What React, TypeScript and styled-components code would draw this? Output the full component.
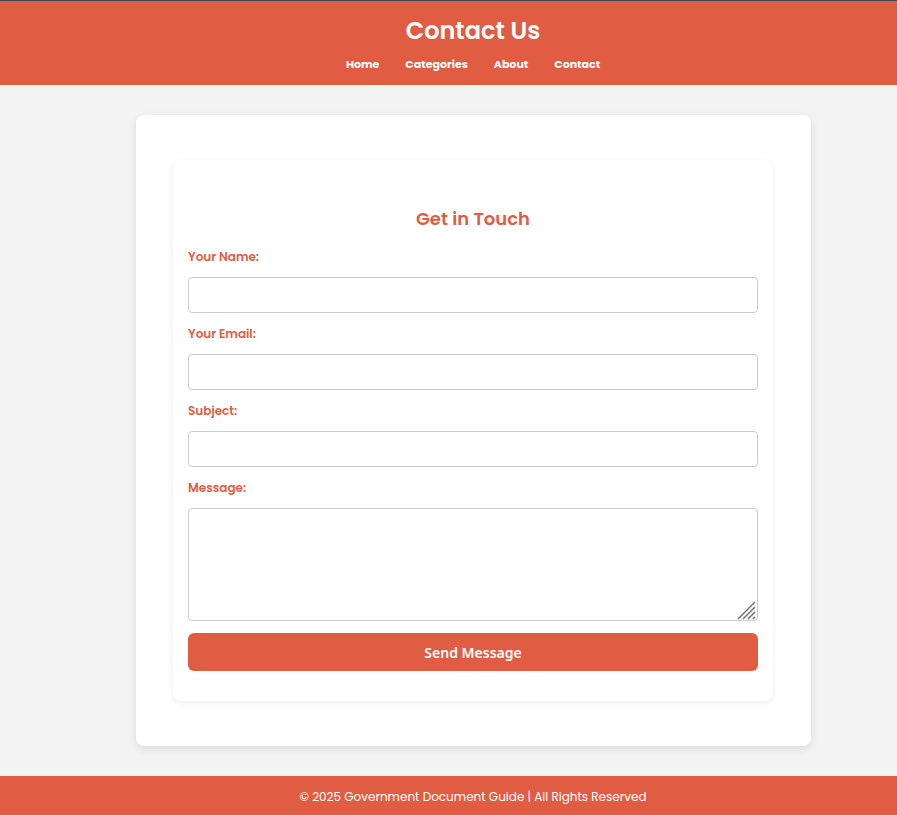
import React from 'react';
import styled, { createGlobalStyle } from 'styled-components';

const accent = '#e05d44';

const GlobalStyle = createGlobalStyle`
  * { box-sizing: border-box; }
  body {
    margin: 0;
    background: #f3f3f3;
    font-family: Poppins, Inter, "Open Sans", sans-serif;
  }
`;

const Page = styled.div`
  display: flex;
  flex-direction: column;
  min-height: 100vh;
`;

const Band = styled.div`
  background: ${accent};
  color: #fff;
  text-align: center;
  padding-left: 49px;
`;

const Header = styled(Band).attrs({ as: 'header' })`
  border-top: 1px solid #41454d;
  padding-top: 12px;
  padding-bottom: 12px;
`;

const Title = styled.h1`
  margin: 0;
  font-size: 24px;
  line-height: 36px;
  font-weight: 600;
`;

const Nav = styled.nav`
  display: flex;
  justify-content: center;
  gap: 26px;
  margin-top: 6px;
`;

const NavLink = styled.a`
  color: #fff;
  font-size: 11px;
  line-height: 18px;
  font-weight: 700;
  text-decoration: none;
`;

const Main = styled.main`
  flex: 1;
  padding: 30px 86px 30px 136px;
`;

const Card = styled.section`
  background: #fff;
  border-radius: 8px;
  padding: 45px 38px 45px 37px;
  box-shadow: 0 3px 8px rgba(0, 0, 0, 0.1);
`;

const Form = styled.form`
  display: flex;
  flex-direction: column;
  border-radius: 8px;
  padding: 45px 15px 30px;
  box-shadow: 0 2px 6px rgba(0, 0, 0, 0.08);
`;

const FormTitle = styled.h2`
  margin: 0 0 16px;
  color: ${accent};
  font-size: 18px;
  line-height: 27px;
  font-weight: 600;
  text-align: center;
`;

const Field = styled.div`
  display: flex;
  flex-direction: column;
  gap: 11px;
  margin-bottom: 12px;
`;

const Label = styled.label`
  color: ${accent};
  font-size: 12px;
  line-height: 18px;
  font-weight: 600;
`;

const Input = styled.input`
  width: 100%;
  height: 36px;
  padding: 8px;
  border: 1px solid #ccc;
  border-radius: 4px;
  font: inherit;
  font-size: 12px;
`;

const TextAreaBox = styled.div`
  position: relative;
`;

const TextArea = styled.textarea`
  display: block;
  width: 100%;
  height: 113px;
  padding: 8px;
  border: 1px solid #ccc;
  border-radius: 4px;
  font: inherit;
  font-size: 12px;
  resize: vertical;

  &::-webkit-resizer {
    background: transparent;
  }
`;

const Grip = styled.svg`
  position: absolute;
  right: 1px;
  bottom: 1px;
  pointer-events: none;
`;

const Submit = styled.button`
  height: 38px;
  border: 0;
  border-radius: 6px;
  background: ${accent};
  color: #fff;
  font-family: "Noto Sans", "Open Sans", sans-serif;
  font-size: 14px;
  font-weight: 600;
  cursor: pointer;
`;

const Footer = styled(Band).attrs({ as: 'footer' })`
  padding-top: 12px;
  padding-bottom: 9px;
  font-size: 12px;
  line-height: 18px;
`;

const links = ['Home', 'Categories', 'About', 'Contact'];
const fields = [
  { id: 'name', label: 'Your Name:', type: 'text' },
  { id: 'email', label: 'Your Email:', type: 'email' },
  { id: 'subject', label: 'Subject:', type: 'text' },
];

export default function App() {
  return (
    <Page>
      <GlobalStyle />
      <Header>
        <Title>Contact Us</Title>
        <Nav>
          {links.map((link) => (
            <NavLink key={link} href={`#${link.toLowerCase()}`}>{link}</NavLink>
          ))}
        </Nav>
      </Header>
      <Main>
        <Card>
          <Form onSubmit={(event: React.FormEvent) => event.preventDefault()}>
            <FormTitle>Get in Touch</FormTitle>
            {fields.map(({ id, label, type }) => (
              <Field key={id}>
                <Label htmlFor={id}>{label}</Label>
                <Input id={id} name={id} type={type} />
              </Field>
            ))}
            <Field>
              <Label htmlFor="message">Message:</Label>
              <TextAreaBox>
                <TextArea id="message" name="message" />
                <Grip width="20" height="20" viewBox="0 0 20 20" aria-hidden="true">
                  <path
                    d="M1 19L18 2M6 19L18 7M11 19L18 12M16 19L18 17"
                    fill="none"
                    stroke="#737373"
                    strokeWidth="1.5"
                  />
                </Grip>
              </TextAreaBox>
            </Field>
            <Submit type="submit">Send Message</Submit>
          </Form>
        </Card>
      </Main>
      <Footer>© 2025 Government Document Guide | All Rights Reserved</Footer>
    </Page>
  );
}
